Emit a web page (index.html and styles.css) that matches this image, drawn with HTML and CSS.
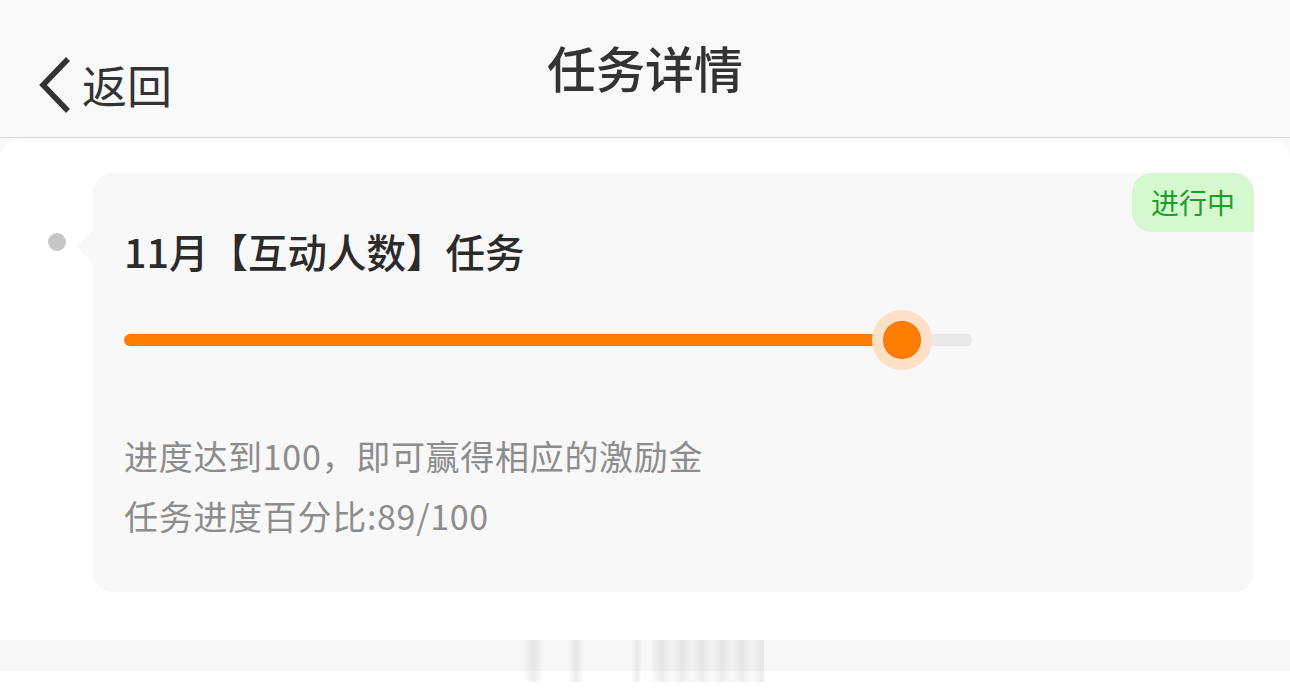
FILE: index.html
```html
<!DOCTYPE html>
<html lang="zh-CN">
<head>
    <meta charset="UTF-8">
    <meta name="viewport" content="width=device-width, initial-scale=1.0">
    <title>任务详情</title>
    <link rel="stylesheet" href="styles.css">
</head>
<body>

<div class="page">
    <!-- 顶部导航 -->
    <header class="nav">
        <a class="back" href="#">
            <svg class="back-icon" width="34" height="58" viewBox="0 0 34 58">
                <polyline points="30,3 5,29 30,55" fill="none" stroke="#333" stroke-width="5.5"/>
            </svg>
            <span>返回</span>
        </a>
        <h1 class="nav-title">任务详情</h1>
    </header>

    <!-- 内容区 -->
    <main class="content">
        <div class="task-row">
            <div class="timeline">
                <span class="dot"></span>
            </div>
            <div class="task-card">
                <span class="status">进行中</span>
                <h2 class="task-name">11月【互动人数】任务</h2>

                <div class="progress">
                    <div class="progress-fill" style="width: 89%"></div>
                    <span class="progress-knob" style="left: 91.7%"></span>
                </div>

                <p class="desc">进度达到100，即可赢得相应的激励金</p>
                <p class="desc">任务进度百分比:89/100</p>
            </div>
        </div>
    </main>

    <div class="footer-band">
        <span class="smear s1"></span>
        <span class="smear s2"></span>
        <span class="smear s3"></span>
        <span class="smear s4"></span>
    </div>
</div>

</body>
</html>
```

FILE: styles.css
```css
/* 全局样式 */
body {
    margin: 0;
    padding: 0;
    background-color: #fff;
    font-family: "Noto Sans CJK SC", "Noto Sans", sans-serif;
    color: #333;
}

.page {
    width: 1290px;
    height: 698px;
    overflow: hidden;
    background-color: #f9f9f9;
}

/* 顶部导航 */
.nav {
    position: relative;
    height: 137px;
    border-bottom: 1px solid #d9d9d9;
    background-color: #f9f9f9;
    display: flex;
    align-items: center;
    justify-content: center;
}

.back {
    position: absolute;
    left: 38px;
    top: 56px;
    display: flex;
    align-items: center;
    gap: 10px;
    color: #333;
    text-decoration: none;
    font-size: 45px;
    line-height: 58px;
}

.back-icon {
    display: block;
}

.nav-title {
    margin: 0;
    margin-top: -5px;
    font-size: 49px;
    font-weight: 500;
    color: #333;
}

/* 内容区 */
.content {
    background-color: #fff;
    border-radius: 22px 22px 0 0;
    padding: 35px 36px 48px 0;
}

.task-row {
    display: flex;
}

.timeline {
    width: 93px;
    flex-shrink: 0;
    position: relative;
}

.dot {
    position: absolute;
    left: 48px;
    top: 60px;
    width: 18px;
    height: 18px;
    border-radius: 50%;
    background-color: #c6c6c6;
}

/* 卡片 */
.task-card {
    position: relative;
    flex: 1;
    height: 419px;
    box-sizing: border-box;
    padding: 53px 31px 0;
    background-color: #f8f8f8;
    border-radius: 20px;
}

.task-card::before {
    content: "";
    position: absolute;
    left: -16px;
    top: 57px;
    border-top: 17px solid transparent;
    border-bottom: 17px solid transparent;
    border-right: 16px solid #f8f8f8;
}

.status {
    position: absolute;
    top: 0;
    right: 0;
    width: 122px;
    height: 59px;
    line-height: 59px;
    text-align: center;
    font-size: 28px;
    color: #1c9f29;
    background-color: #d6f8d0;
    border-radius: 20px 20px 0 20px;
}

.task-name {
    margin: 0;
    font-size: 39.5px;
    line-height: 50px;
    font-weight: 500;
    color: #2b2b2b;
}

/* 进度条 */
.progress {
    position: relative;
    width: 848px;
    height: 12px;
    margin-top: 58px;
    border-radius: 6px;
    background-color: #e8e8e8;
}

.progress-fill {
    height: 100%;
    border-radius: 6px;
    background-color: #ff7d00;
}

.progress-knob {
    position: absolute;
    top: 6px;
    width: 36px;
    height: 36px;
    margin: -18px 0 0 -18px;
    border-radius: 50%;
    background-color: #ff7d00;
    box-shadow: 0 0 0 1px #f07000, 0 0 0 12px #fde0c6;
}

/* 说明文字 */
.desc {
    margin: 0;
    font-size: 34px;
    line-height: 60px;
    letter-spacing: 0.7px;
    color: #8d8d8d;
}

.progress + .desc {
    margin-top: 80px;
}

/* 底部 */
.footer-band {
    position: relative;
    height: 31px;
    background-color: #f7f7f7;
    border-bottom: 27px solid #fff;
}

.smear {
    position: absolute;
    top: 0;
    height: 42px;
    background: linear-gradient(to right, rgba(0,0,0,0), rgba(0,0,0,0.07), rgba(0,0,0,0));
}

.s1 { left: 522px; width: 22px; border-radius: 0 0 10px 10px; }
.s2 { left: 568px; width: 16px; }
.s3 { left: 632px; width: 10px; }
.s4 { left: 652px; width: 112px; background: repeating-linear-gradient(to right, rgba(0,0,0,0.02) 0, rgba(0,0,0,0.07) 10px, rgba(0,0,0,0.02) 20px); }
```
